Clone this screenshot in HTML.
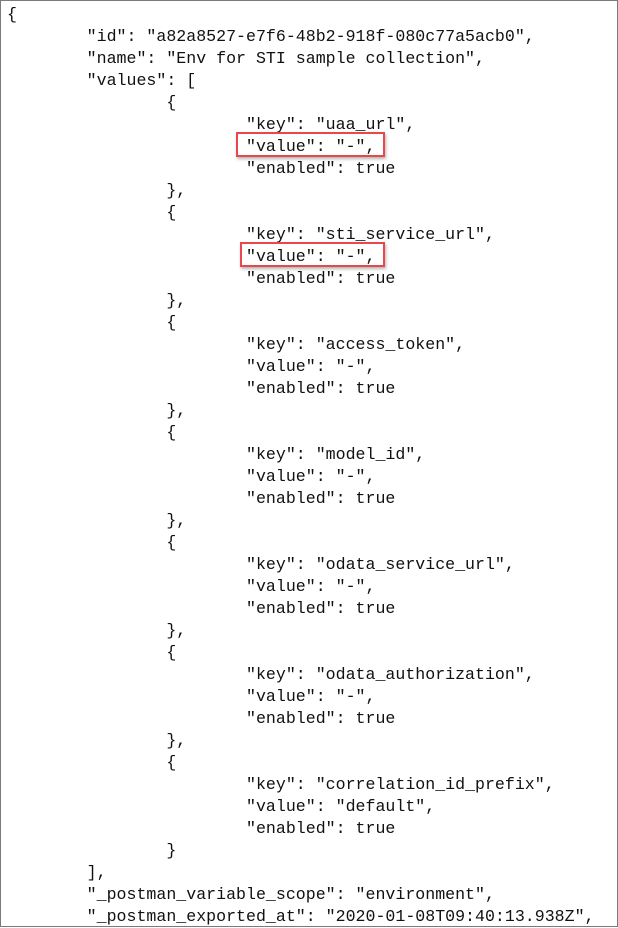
<!DOCTYPE html>
<html><head><meta charset="utf-8"><style>
html,body{margin:0;padding:0;background:#fff;}
body{width:618px;height:927px;position:relative;overflow:hidden;}
.frame{position:absolute;left:0;top:0;width:616px;height:925px;border:1px solid #7a7a7a;}
pre{position:absolute;left:7px;top:4px;margin:0;font-family:"Liberation Mono",monospace;font-size:16.6px;line-height:22px;color:#111;tab-size:8;}
.box{position:absolute;border:2px solid #e8474c;box-shadow:1px 2px 3px rgba(0,0,0,0.3);}
</style></head><body>
<div class="frame"></div>
<pre>{
        "id": "a82a8527-e7f6-48b2-918f-080c77a5acb0",
        "name": "Env for STI sample collection",
        "values": [
                {
                        "key": "uaa_url",
                        "value": "-",
                        "enabled": true
                },
                {
                        "key": "sti_service_url",
                        "value": "-",
                        "enabled": true
                },
                {
                        "key": "access_token",
                        "value": "-",
                        "enabled": true
                },
                {
                        "key": "model_id",
                        "value": "-",
                        "enabled": true
                },
                {
                        "key": "odata_service_url",
                        "value": "-",
                        "enabled": true
                },
                {
                        "key": "odata_authorization",
                        "value": "-",
                        "enabled": true
                },
                {
                        "key": "correlation_id_prefix",
                        "value": "default",
                        "enabled": true
                }
        ],
        "_postman_variable_scope": "environment",
        "_postman_exported_at": "2020-01-08T09:40:13.938Z",</pre>
<div class="box" style="left:236px;top:132px;width:145px;height:21px;"></div>
<div class="box" style="left:240px;top:242px;width:141px;height:21px;"></div>
</body></html>
